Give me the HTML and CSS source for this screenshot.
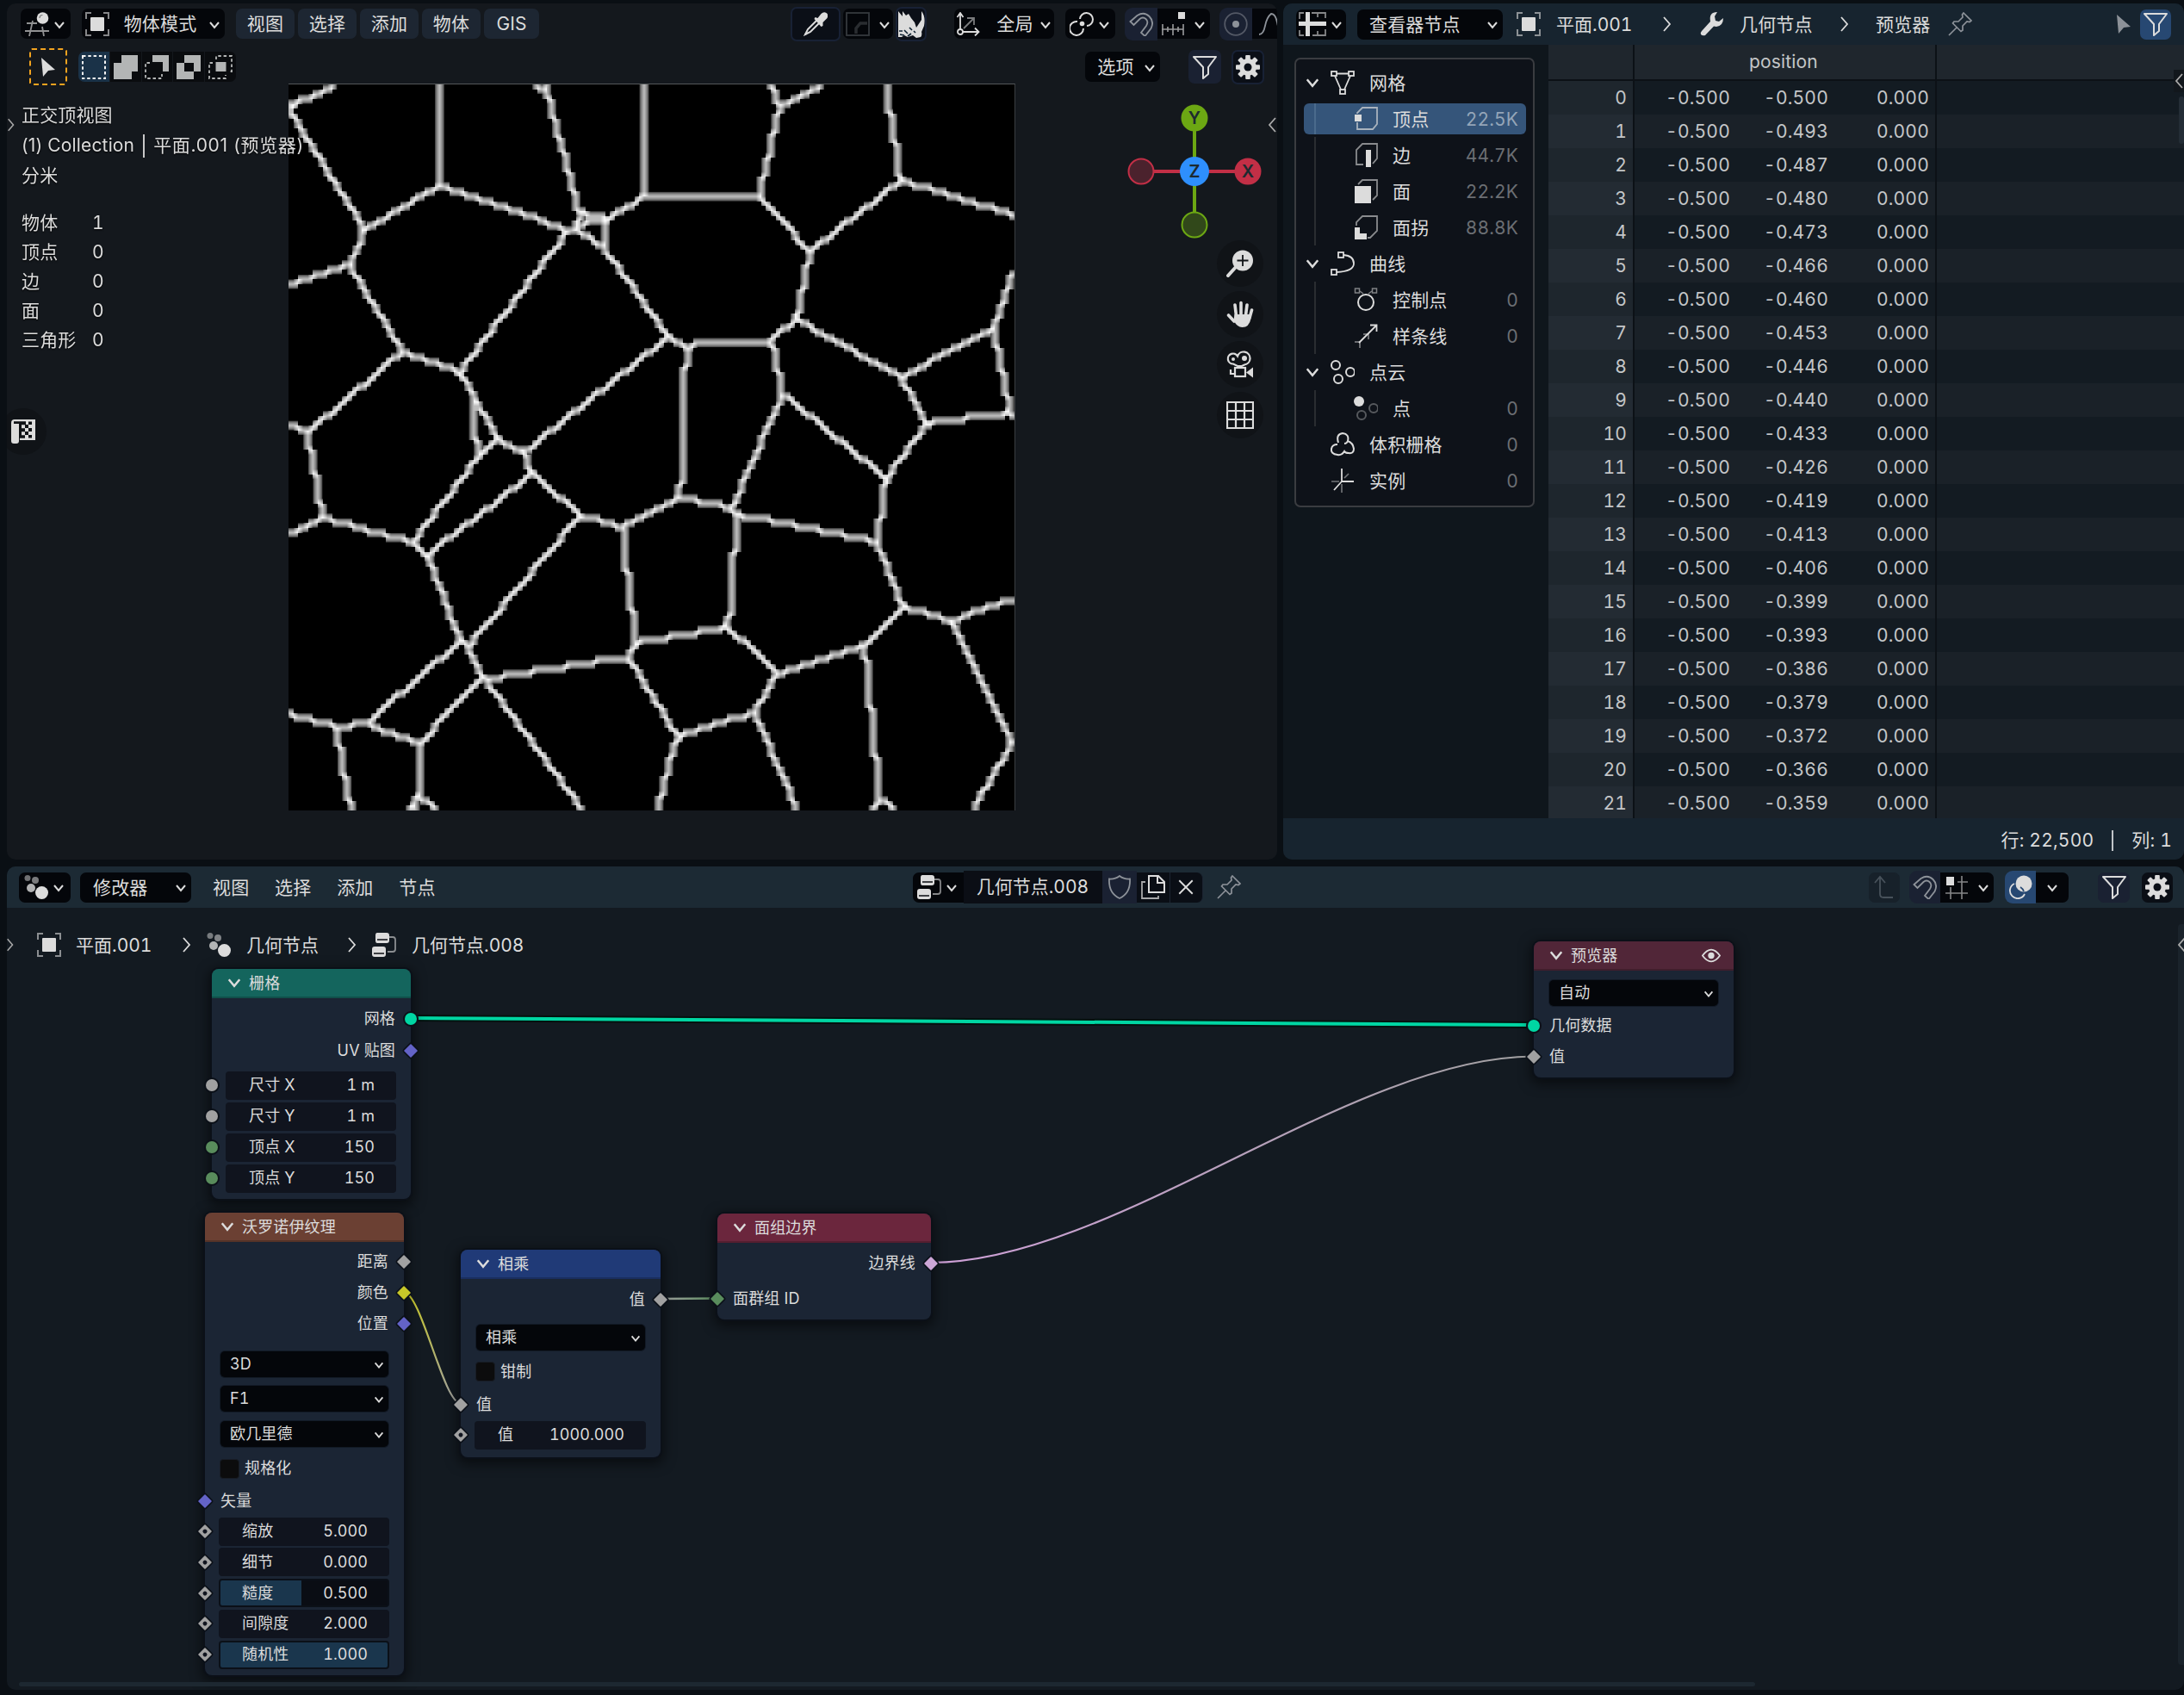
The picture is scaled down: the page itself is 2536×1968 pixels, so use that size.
FILE: index.html
```
<!DOCTYPE html>
<html lang="zh-CN">
<head>
<meta charset="utf-8">
<title>Blender</title>
<link rel="stylesheet" href="styles.css">
</head>
<body>
<svg class="defs" width="0" height="0" aria-hidden="true">
  <defs>
    <symbol id="i-chev" viewBox="0 0 16 16"><path d="M3 5l5 6 5-6" fill="none" stroke="currentColor" stroke-width="2"/></symbol>
    <symbol id="i-next" viewBox="0 0 12 18"><path d="M2 1l7 8-7 8" fill="none" stroke="currentColor" stroke-width="1.8"/></symbol>
    <symbol id="i-prev" viewBox="0 0 12 18"><path d="M10 1L3 9l7 8" fill="none" stroke="currentColor" stroke-width="1.8"/></symbol>
    <symbol id="i-view3d" viewBox="0 0 28 28"><g fill="none" stroke="currentColor" opacity=".65" stroke-width="1.8"><path d="M2 13h12M0 22h28M9 10L5 28M20 17l2 11"/></g><circle cx="20.500" cy="7" r="6.800" fill="currentColor"/><path d="M17 7q0-3.500 3.500-3.500" stroke="#777" fill="none" stroke-width="1.200"/></symbol>
    <symbol id="i-object" viewBox="0 0 28 28"><path d="M1 8V1h6M21 1h6v7M27 20v7h-6M7 27H1v-7" fill="none" stroke="currentColor" stroke-width="2" opacity=".6"/><rect x="6" y="6" width="16" height="16" rx="1" fill="currentColor"/></symbol>
    <symbol id="i-arrow" viewBox="0 0 28 28"><path d="M6 3l16 14-8 1-6 7z" fill="currentColor"/></symbol>
    <symbol id="i-sel1" viewBox="0 0 28 28"><rect x="1" y="1" width="26" height="26" fill="none" stroke="currentColor" stroke-width="2" stroke-dasharray="3.500 2.800"/></symbol>
    <symbol id="i-sel2" viewBox="0 0 28 28"><path d="M9 0h19v19h-7v9H0V9h9z" fill="currentColor"/></symbol>
    <symbol id="i-sel3" viewBox="0 0 28 28"><path d="M9 0h19v19h-7V8H9z" fill="currentColor"/><path d="M6 9H1v18h19v-5" fill="none" stroke="currentColor" stroke-width="1.800" stroke-dasharray="3.500 2.800"/></symbol>
    <symbol id="i-sel4" viewBox="0 0 28 28"><path fill-rule="evenodd" d="M9 0h19v19h-8v9H0V9h9zM9 9v10h11V9z" fill="currentColor"/></symbol>
    <symbol id="i-sel5" viewBox="0 0 28 28"><rect x="8.500" y="8" width="12" height="11" fill="currentColor"/><path d="M9 5V1h18v18h-4M5 9H1v18h19v-4" fill="none" stroke="currentColor" stroke-width="1.800" stroke-dasharray="3.500 2.800"/></symbol>
    <symbol id="i-dropper" viewBox="0 0 28 28"><path d="M13.500 6l3 1 4-5q3-3 6-1t1 6l-5 5v4l-2 1-8-9z" fill="currentColor"/><path d="M16 9L5 20l-3 6 6-3 11-11" fill="none" stroke="currentColor" stroke-width="2"/><path d="M2 24l2 2-3 1z" fill="currentColor"/></symbol>
    <symbol id="i-falloff" viewBox="0 0 28 28"><rect x="1" y="1" width="26" height="26" fill="none" stroke="currentColor" stroke-width="1.800"/><path d="M12 25v-6l5-6h8" fill="none" stroke="currentColor" stroke-width="3.500" opacity=".75"/></symbol>
    <symbol id="i-rhino" viewBox="0 0 32 32"><path d="M1 1l5 6V1l4 5 3-2 3 5 4 5 2 6 6-9V1q5 6 3 17l-3 7q1 4-1 6l-5 1-4-3-6 2-4-2-3 2H1z" fill="currentColor"/><path d="M2 24h4M8 23l4 4M14 20l3 3M3 28l5 1M12 30l4-3M19 24l2 2" fill="none" stroke="#0f2233" stroke-width="1.600"/></symbol>
    <symbol id="i-orient" viewBox="0 0 28 28"><g fill="none" stroke="currentColor" stroke-width="1.800"><circle cx="5" cy="23" r="3"/><path d="M5 20V1M1.500 6L5 1l3.500 5M8 23h18M22 18.500l4.500 4.500-4.500 4.500"/><path d="M9 19L20 8M13 7h8v8" opacity=".55"/></g></symbol>
    <symbol id="i-pivot" viewBox="0 0 28 28"><g fill="none" stroke="currentColor" stroke-width="2"><path d="M12 8A7.500 7.500 0 1 1 20 16"/><path d="M9 11A8 8 0 1 0 16 19"/></g><circle cx="14.500" cy="13.500" r="2.800" fill="currentColor"/></symbol>
    <symbol id="i-magnet" viewBox="0 0 28 28"><path d="M1.500 11l8-7q8-5 14 1t2 14l-7 9-4.500-4 6-8q3-5-.5-8t-7 0l-7 7z" fill="none" stroke="currentColor" stroke-width="1.800"/></symbol>
    <symbol id="i-incr" viewBox="0 0 28 28"><rect x="20" y="0" width="8" height="8" fill="currentColor"/><path d="M1 20h25M2 14v13M8 17v6M14 14v13M20 17v6M26 14v13" stroke="currentColor" stroke-width="1.600" opacity=".7"/></symbol>
    <symbol id="i-prop" viewBox="0 0 28 28"><circle cx="14" cy="14" r="12.800" fill="none" stroke="currentColor" stroke-width="1.800" opacity=".5"/><circle cx="14" cy="14" r="4" fill="currentColor"/></symbol>
    <symbol id="i-curvef" viewBox="0 0 28 28"><path d="M1 26q5 0 7-10T15 2q5 0 7 10t6 14" fill="none" stroke="currentColor" stroke-width="1.800"/></symbol>
    <symbol id="i-filter" viewBox="0 0 28 28"><path d="M1 2h26L18 14v8l-6 5V14z" fill="none" stroke="currentColor" stroke-width="2" stroke-linejoin="round"/></symbol>
    <symbol id="i-gear" viewBox="0 0 28 28"><g fill="currentColor"><rect x="11.200" y="0" width="5.600" height="28" rx="1"/><rect x="11.200" y="0" width="5.600" height="28" rx="1" transform="rotate(45 14 14)"/><rect x="11.200" y="0" width="5.600" height="28" rx="1" transform="rotate(90 14 14)"/><rect x="11.200" y="0" width="5.600" height="28" rx="1" transform="rotate(135 14 14)"/><circle cx="14" cy="14" r="10"/></g><circle cx="14" cy="14" r="4.500" fill="#0b0f17"/></symbol>
    <symbol id="i-zoom" viewBox="0 0 32 32"><circle cx="19" cy="12.500" r="12" fill="currentColor"/><path d="M11 20L2 30" stroke="currentColor" stroke-width="4" stroke-linecap="round"/><path d="M19 6v13M12.500 12.500h13" stroke="#101317" stroke-width="1.800"/></symbol>
    <symbol id="i-hand" viewBox="0 0 32 32"><g stroke="currentColor" stroke-width="3.600" stroke-linecap="round" fill="none"><path d="M11.500 18L10 5M17 16V2.500M22.500 17L24 5M27 20l2.500-9M9 24l-6.500-7"/></g><path d="M9.500 16h18l1 5q-2 10-10 10-6 0-10-8z" fill="currentColor"/></symbol>
    <symbol id="i-camera" viewBox="0 0 32 32"><g fill="none" stroke="currentColor" stroke-width="2.200"><path d="M8 15.500a6 6 0 1 1 5-9 7.500 7.500 0 1 1 8 10L18 18h-5z"/><rect x="10" y="20" width="12" height="10"/><path d="M5 22v5h5"/></g><path d="M23 25.500l8-6v12z" fill="currentColor"/><circle cx="8" cy="10" r="2" fill="currentColor"/><circle cx="21" cy="9" r="3" fill="currentColor"/></symbol>
    <symbol id="i-grid" viewBox="0 0 32 32"><path d="M1 1h30v30H1zM1 11h30M1 21h30M11 1v30M21 1v30" fill="none" stroke="currentColor" stroke-width="2.200"/></symbol>
    <symbol id="i-toggle" viewBox="0 0 28 28"><path d="M4 0h24v24H10v-3h2V5H9v20q0 3-3 3H3q-3 0-3-3V4q0-4 4-4z" fill="currentColor"/><path d="M3 2.200h14v4h-5v4h4v4h-4v4h4v3.600H9V5H3zM20 2.500h4v3.500h-4zM16 6h4v4h-4zM20 10h4v4h-4zM16 14h4v4h-4zM20 18h4v3.500h-4z" fill="#101317"/></symbol>
    <symbol id="i-sheet" viewBox="0 0 32 28"><path d="M1 8V1h5M15 1h16v6M31 20v7H16M6 27H1v-6M22 1v5M22 22v5" fill="none" stroke="currentColor" stroke-width="1.800" opacity=".6"/><path d="M8 0h5v11h19v5H13v12H8V16H0v-5h8z" fill="currentColor"/></symbol>
    <symbol id="i-wrench" viewBox="0 0 28 28"><path d="M20 0l-3 5 1 5 4 1 5-4q0 9-8 10l-3-.5L6 27q-3 1-5-1-1-2 1-4l10-11q-2-11 8-11z" fill="currentColor"/></symbol>
    <symbol id="i-pin" viewBox="0 0 28 28"><path d="M18 1l9 9-2 1.500-3-.5-5 5 0 5-2 1.500L5.500 13l1.500-2 5 0 5-5-.5-3zM10 18L1 27" fill="none" stroke="currentColor" stroke-width="1.700"/></symbol>
    <symbol id="i-mesh" viewBox="0 0 28 28"><g fill="none" stroke="currentColor" stroke-width="1.800"><rect x="1" y="1" width="6" height="5"/><rect x="21" y="1" width="6" height="5"/><rect x="11" y="22" width="6" height="5"/><path d="M7 3.500h14M5 6l7 16M23 6l-7 16"/></g></symbol>
    <symbol id="i-cvert" viewBox="0 0 28 28"><path d="M4 8V7l6-6h17v19l-5 6H4v-8" fill="none" stroke="currentColor" stroke-width="1.800" opacity=".7"/><rect x="1" y="9" width="8" height="8" fill="currentColor"/></symbol>
    <symbol id="i-cedge" viewBox="0 0 28 28"><path d="M11 25H3V8l7-7h17v17l-5 6" fill="none" stroke="currentColor" stroke-width="1.800" opacity=".6"/><rect x="14" y="8" width="6" height="20" fill="currentColor"/></symbol>
    <symbol id="i-cface" viewBox="0 0 28 28"><path d="M5 6l5-5h17v18l-5 5" fill="none" stroke="currentColor" stroke-width="1.800" opacity=".6"/><rect x="1" y="8" width="19" height="20" fill="currentColor"/></symbol>
    <symbol id="i-ccorner" viewBox="0 0 28 28"><path d="M3 12V8l7-7h17v17l-8 8h-3" fill="none" stroke="currentColor" stroke-width="1.800" opacity=".6"/><path d="M1 14h6v7h8v7H1z" fill="currentColor"/></symbol>
    <symbol id="i-curve" viewBox="0 0 28 28"><g fill="none" stroke="currentColor" stroke-width="1.800"><rect x="9" y="1" width="6" height="6"/><rect x="1" y="21" width="6" height="6"/><path d="M15 4q12 1 12 10T7 24"/></g></symbol>
    <symbol id="i-ctrl" viewBox="0 0 28 28"><circle cx="14" cy="17" r="9" fill="none" stroke="currentColor" stroke-width="2"/><g fill="none" stroke="currentColor" stroke-width="1.500" opacity=".55"><rect x="1.500" y="1" width="5" height="5"/><rect x="21.500" y="1" width="5" height="5"/><path d="M7 4l4 3M21 4l-4 3"/></g></symbol>
    <symbol id="i-spline" viewBox="0 0 28 28"><path d="M6 22L27 1M19 1.500h7.500V9" fill="none" stroke="currentColor" stroke-width="1.800"/><path d="M1 21h6v7M11 12h6v6" fill="none" stroke="currentColor" stroke-width="1.500" opacity=".6"/></symbol>
    <symbol id="i-cloudp" viewBox="0 0 28 28"><g fill="none" stroke="currentColor" stroke-width="2"><circle cx="6" cy="6" r="5"/><circle cx="23" cy="14" r="5"/><circle cx="9" cy="22" r="5"/></g></symbol>
    <symbol id="i-point" viewBox="0 0 28 28"><circle cx="6" cy="6" r="6" fill="currentColor"/><g fill="none" stroke="currentColor" stroke-width="2" opacity=".35"><circle cx="23" cy="14" r="5"/><circle cx="9" cy="22" r="5"/></g></symbol>
    <symbol id="i-volume" viewBox="0 0 28 28"><path d="M9 12Q6 2 14 1q8 1 6 9 6 2 7 9 0 6-6 5-4 0-5-2-3 5-8 4-8-1-7-7 1-5 7-5M20 10q-1 3-4 3" fill="none" stroke="currentColor" stroke-width="2"/></symbol>
    <symbol id="i-inst" viewBox="0 0 28 28"><path d="M13 0v15h14M13 15L4 25" fill="none" stroke="currentColor" stroke-width="1.800"/><path d="M1 15h9M13 18v10M16 11l5-5" fill="none" stroke="currentColor" stroke-width="1.600" opacity=".5"/></symbol>
    <symbol id="i-geo" viewBox="0 0 28 28"><g fill="currentColor"><circle cx="4" cy="3.500" r="3.500" opacity=".5"/><circle cx="13" cy="6" r="4" opacity=".55"/><circle cx="8" cy="15" r="5" opacity=".8"/><circle cx="20.500" cy="20.500" r="7.500"/></g></symbol>
    <symbol id="i-tree" viewBox="0 0 28 28"><g fill="currentColor"><path d="M6 0h11q3 0 3 3v6q0 3-3 3H6q-2 0-2-3V3q0-3 2-3zM3 16h10q3 0 3 3v6q0 3-3 3H3q-3 0-3-3v-6q0-3 3-3z"/></g><path d="M6 8h12M2 24h12" stroke="#0a0d12" stroke-width="1.600"/><path d="M21 5h3q3 0 3 3v11q0 3-3 3h-6M16 5h5" fill="none" stroke="currentColor" stroke-width="1.800" opacity=".6"/></symbol>
    <symbol id="i-shield" viewBox="0 0 28 28"><path d="M14 1q5 4 12 3.500Q27 21 14 27 1 21 2 4.500 9 5 14 1z" fill="none" stroke="currentColor" stroke-width="1.800"/></symbol>
    <symbol id="i-copy" viewBox="0 0 28 28"><path d="M9 1h11l7 7v12H9zM19 1v8h8" fill="none" stroke="currentColor" stroke-width="2"/><path d="M5 8H1v19h19v-3" fill="none" stroke="currentColor" stroke-width="1.800" opacity=".75"/></symbol>
    <symbol id="i-x" viewBox="0 0 28 28"><path d="M5 5l18 18M23 5L5 23" fill="none" stroke="currentColor" stroke-width="2.200"/></symbol>
    <symbol id="i-up" viewBox="0 0 28 28"><path d="M9 2v20q0 4 4 4h11M3 9l6-7 6 7" fill="none" stroke="currentColor" stroke-width="1.800"/></symbol>
    <symbol id="i-snapg" viewBox="0 0 28 28"><rect x="2" y="2" width="9" height="10" fill="currentColor"/><path d="M15 8h12M1 21h26M7 14v14M20 1v27" fill="none" stroke="currentColor" stroke-width="1.600" opacity=".6"/></symbol>
    <symbol id="i-overlay" viewBox="0 0 28 28"><circle cx="18" cy="10" r="9.500" fill="currentColor"/><path d="M7 10a9 9 0 1 0 12 12" fill="none" stroke="currentColor" stroke-width="1.800"/><path d="M14 14a9 9 0 0 1 4 5" fill="none" stroke="#274872" stroke-width="1.600"/></symbol>
    <symbol id="i-eye" viewBox="0 0 24 18"><path d="M1 9q11-15 22 0-11 15-22 0z" fill="none" stroke="currentColor" stroke-width="2"/><circle cx="12" cy="9" r="4" fill="currentColor"/></symbol>
    <linearGradient id="g-pink" gradientUnits="userSpaceOnUse" x1="1081" y1="0" x2="1781" y2="0"><stop offset="0" stop-color="#cfa0d8"/><stop offset="1" stop-color="#a1a1a1"/></linearGradient>
    <linearGradient id="g-yellow" gradientUnits="userSpaceOnUse" x1="0" y1="1500" x2="0" y2="1630"><stop offset="0" stop-color="#c7c729"/><stop offset="1" stop-color="#a1a1a1"/></linearGradient>
    <linearGradient id="g-green" gradientUnits="userSpaceOnUse" x1="767" y1="0" x2="833" y2="0"><stop offset="0" stop-color="#a1a1a1"/><stop offset="1" stop-color="#598c5c"/></linearGradient>
  </defs>
</svg>

<div class="window">
  <section class="area view3d">
    <header class="bar v-bar">
      <div class="btn dark w58"><svg class="i28"><use href="#i-view3d"/></svg><svg class="chev"><use href="#i-chev"/></svg></div>
      <div class="btn dark mode"><svg class="i28"><use href="#i-object"/></svg><span>物体模式</span><svg class="chev"><use href="#i-chev"/></svg></div>
      <nav class="menus"><span>视图</span><span>选择</span><span>添加</span><span>物体</span><span class="gis">GIS</span></nav>
      <div class="v-right">
        <div class="btn outlined w58"><svg class="i28"><use href="#i-dropper"/></svg></div>
        <div class="btn dark w58 ml3"><svg class="i28 dim"><use href="#i-falloff"/></svg><svg class="chev wide"><use href="#i-chev"/></svg></div>
        <div class="btn outlined w36 ml3"><svg class="i32"><use href="#i-rhino"/></svg></div>
        <div class="btn dark orient"><svg class="i28"><use href="#i-orient"/></svg><span>全局</span><svg class="chev"><use href="#i-chev"/></svg></div>
        <div class="btn dark w58 ml13"><svg class="i28"><use href="#i-pivot"/></svg><svg class="chev"><use href="#i-chev"/></svg></div>
        <div class="pair ml11"><div class="btn navy w38"><svg class="i28 mid"><use href="#i-magnet"/></svg></div><div class="btn dark w61"><svg class="i28"><use href="#i-incr"/></svg><svg class="chev wide"><use href="#i-chev"/></svg></div></div>
        <div class="pair ml11 cut"><div class="btn navy w38"><svg class="i28 mid"><use href="#i-prop"/></svg></div><div class="btn dark w61 start"><svg class="i28 mid"><use href="#i-curvef"/></svg></div></div>
      </div>
    </header>
    <div class="bar tools">
      <div class="tool-active"><svg class="i28"><use href="#i-arrow"/></svg></div>
      <div class="selmodes">
        <span class="on"><svg class="i28"><use href="#i-sel1"/></svg></span><span><svg class="i28"><use href="#i-sel2"/></svg></span><span><svg class="i28"><use href="#i-sel3"/></svg></span><span><svg class="i28"><use href="#i-sel4"/></svg></span><span><svg class="i28"><use href="#i-sel5"/></svg></span>
      </div>
      <div class="btn dark options"><span>选项</span><svg class="chev"><use href="#i-chev"/></svg></div>
      <div class="btn navy w38 tall"><svg class="i28"><use href="#i-filter"/></svg></div>
      <div class="btn outlined w38 gearb"><svg class="i28"><use href="#i-gear"/></svg></div>
    </div>
    <canvas id="plane" class="plane" width="843" height="843"></canvas>
    <div class="overlay">
      <p>正交顶视图</p>
      <p>(1) Collection<i></i><span>平面.001 (预览器)</span></p>
      <p>分米</p>
      <dl><dt>物体</dt><dd>1</dd><dt>顶点</dt><dd>0</dd><dt>边</dt><dd>0</dd><dt>面</dt><dd>0</dd><dt>三角形</dt><dd>0</dd></dl>
    </div>
    <svg class="tab-l"><use href="#i-next"/></svg>
    <svg class="tab-r"><use href="#i-prev"/></svg>
    <div class="midtool"><svg class="i28"><use href="#i-toggle"/></svg></div>
    <svg class="gizmo" viewBox="0 0 160 160" width="160" height="160">
      <path d="M80 80V18M80 80v62" stroke="#6ca713" stroke-width="4"/>
      <path d="M18 80h124" stroke="#c22f46" stroke-width="4"/>
      <circle cx="80" cy="18" r="15.500" fill="#6ca713"/><circle cx="142" cy="80" r="15.500" fill="#c22f46"/>
      <circle cx="18" cy="80" r="14.500" fill="#4b222d" stroke="#c22f46" stroke-width="2"/>
      <circle cx="80" cy="142" r="14.500" fill="#31481a" stroke="#6ca713" stroke-width="2"/>
      <circle cx="80" cy="80" r="17" fill="#2e8ffd"/>
      <g class="axis"><text x="80" y="25">Y</text><text x="80" y="87">Z</text><text x="142" y="87">X</text></g>
    </svg>
    <div class="navs">
      <span><svg class="i32"><use href="#i-zoom"/></svg></span><span><svg class="i32"><use href="#i-hand"/></svg></span><span><svg class="i32"><use href="#i-camera"/></svg></span><span><svg class="i32"><use href="#i-grid"/></svg></span>
    </div>
  </section>

  <section class="area sheet">
    <header class="bar s-bar">
      <div class="btn dark w58"><svg class="i32"><use href="#i-sheet"/></svg><svg class="chev"><use href="#i-chev"/></svg></div>
      <div class="btn dark picker"><span>查看器节点</span><svg class="chev"><use href="#i-chev"/></svg></div>
      <svg class="i28 c1"><use href="#i-object"/></svg><span class="c2">平面.001</span>
      <svg class="sep"><use href="#i-next"/></svg>
      <svg class="i28 c3"><use href="#i-wrench"/></svg><span class="c4">几何节点</span>
      <svg class="sep"><use href="#i-next"/></svg>
      <span class="c5">预览器</span><svg class="i28 c6 mid"><use href="#i-pin"/></svg>
      <div class="s-end"><div class="btn w38 mid"><svg class="i28"><use href="#i-arrow"/></svg></div><div class="btn blue w36"><svg class="i28"><use href="#i-filter"/></svg></div></div>
    </header>
    <div class="s-main">
      <aside class="tree">
        <ul>
          <li><svg class="tw"><use href="#i-chev"/></svg><svg class="i28"><use href="#i-mesh"/></svg><span>网格</span></li>
          <li class="kid on"><svg class="i28"><use href="#i-cvert"/></svg><span>顶点</span><b>22.5K</b></li>
          <li class="kid"><svg class="i28"><use href="#i-cedge"/></svg><span>边</span><b>44.7K</b></li>
          <li class="kid"><svg class="i28"><use href="#i-cface"/></svg><span>面</span><b>22.2K</b></li>
          <li class="kid"><svg class="i28"><use href="#i-ccorner"/></svg><span>面拐</span><b>88.8K</b></li>
          <li><svg class="tw"><use href="#i-chev"/></svg><svg class="i28"><use href="#i-curve"/></svg><span>曲线</span></li>
          <li class="kid"><svg class="i28"><use href="#i-ctrl"/></svg><span>控制点</span><b>0</b></li>
          <li class="kid"><svg class="i28"><use href="#i-spline"/></svg><span>样条线</span><b>0</b></li>
          <li><svg class="tw"><use href="#i-chev"/></svg><svg class="i28"><use href="#i-cloudp"/></svg><span>点云</span></li>
          <li class="kid"><svg class="i28"><use href="#i-point"/></svg><span>点</span><b>0</b></li>
          <li class="leaf"><svg class="i28"><use href="#i-volume"/></svg><span>体积栅格</span><b>0</b></li>
          <li class="leaf"><svg class="i28"><use href="#i-inst"/></svg><span>实例</span><b>0</b></li>
        </ul>
      </aside>
      <div class="table" id="table">
        <div class="tr th"><span class="ix"></span><span class="pos">position</span><span class="rest"></span></div>
      </div>
      <div class="tab-s"><svg><use href="#i-prev"/></svg></div>
      <div class="scroll-s"></div>
    </div>
    <footer class="s-foot"><span>行: 22,500</span><i></i><span>列: 1</span></footer>
  </section>

  <section class="area nodes">
    <div class="scroll-v"></div>
    <header class="bar n-bar">
      <div class="btn dark w60"><svg class="i28"><use href="#i-geo"/></svg><svg class="chev"><use href="#i-chev"/></svg></div>
      <div class="btn dark modif"><span>修改器</span><svg class="chev"><use href="#i-chev"/></svg></div>
      <nav class="plain"><span>视图</span><span>选择</span><span>添加</span><span>节点</span></nav>
      <div class="n-mid">
        <div class="btn dark w59"><svg class="i28"><use href="#i-tree"/></svg><svg class="chev"><use href="#i-chev"/></svg></div>
        <div class="name">几何节点.008</div>
        <div class="btn navy sq w40"><svg class="i28 mid"><use href="#i-shield"/></svg></div>
        <div class="btn dark2 sq w39"><svg class="i28"><use href="#i-copy"/></svg></div>
        <div class="btn dark2 w38 rr"><svg class="i24"><use href="#i-x"/></svg></div>
        <svg class="i28 mid pin"><use href="#i-pin"/></svg>
      </div>
      <div class="n-end">
        <div class="btn faint w36"><svg class="i28"><use href="#i-up"/></svg></div>
        <div class="pair m12"><div class="btn navy w36"><svg class="i28 mid"><use href="#i-magnet"/></svg></div><div class="btn dark w62"><svg class="i28"><use href="#i-snapg"/></svg><svg class="chev wide"><use href="#i-chev"/></svg></div></div>
        <div class="pair m13"><div class="btn blue w36"><svg class="i28"><use href="#i-overlay"/></svg></div><div class="btn dark w38"><svg class="chev solo"><use href="#i-chev"/></svg></div></div>
        <div class="btn navy w37 m34"><svg class="i28"><use href="#i-filter"/></svg></div>
        <div class="btn dark2 w36 m14"><svg class="i28"><use href="#i-gear"/></svg></div>
      </div>
    </header>
    <div class="crumbs">
      <svg class="i28"><use href="#i-object"/></svg><span class="k1">平面.001</span><svg class="sep"><use href="#i-next"/></svg>
      <svg class="i28 k2"><use href="#i-geo"/></svg><span class="k3">几何节点</span><svg class="sep"><use href="#i-next"/></svg>
      <svg class="i28 k2"><use href="#i-tree"/></svg><span class="k3">几何节点.008</span>
    </div>
    <svg class="links" viewBox="0 1006 2536 956" width="2536" height="956">
      <g fill="none">
        <path d="M477 1182L1781 1190" stroke="#04120f" stroke-width="8"/><path d="M477 1182L1781 1190" stroke="#00d6a3" stroke-width="4"/>
        <path d="M1081 1466C1291 1466 1571 1226.500 1781 1226.500" stroke="url(#g-pink)" stroke-width="2.200"/>
        <path d="M469 1500.500C489 1500.500 515 1629.500 535 1629.500" stroke="url(#g-yellow)" stroke-width="2.200"/>
        <path d="M767 1508L833 1507.500" stroke="url(#g-green)" stroke-width="2.600"/>
      </g>
    </svg>

    <article class="node n-grid">
      <h3><svg class="tw"><use href="#i-chev"/></svg>栅格</h3>
      <div class="row out r37">网格<i class="so circ geo"></i></div>
      <div class="row out r37">UV 贴图<i class="so dia vec"></i></div>
      <div class="row r36 gap4"><i class="si circ flt"></i><div class="field"><span>尺寸 X</span><b>1 m</b></div></div>
      <div class="row r36"><i class="si circ flt"></i><div class="field"><span>尺寸 Y</span><b>1 m</b></div></div>
      <div class="row r36"><i class="si circ int"></i><div class="field"><span>顶点 X</span><b>150</b></div></div>
      <div class="row r36"><i class="si circ int"></i><div class="field"><span>顶点 Y</span><b>150</b></div></div>
    </article>

    <article class="node n-voro">
      <h3><svg class="tw"><use href="#i-chev"/></svg>沃罗诺伊纹理</h3>
      <div class="row out">距离<i class="so dia flt"></i></div>
      <div class="row out">颜色<i class="so dia col"></i></div>
      <div class="row out">位置<i class="so dia vec"></i></div>
      <div class="row drop gap9"><div class="select">3D<svg><use href="#i-chev"/></svg></div></div>
      <div class="row drop"><div class="select">F1<svg><use href="#i-chev"/></svg></div></div>
      <div class="row drop"><div class="select">欧几里德<svg><use href="#i-chev"/></svg></div></div>
      <div class="row check"><i class="box"></i>规格化</div>
      <div class="row"><i class="si dia vec"></i>矢量</div>
      <div class="row"><i class="si dia flt dot"></i><div class="field"><span>缩放</span><b>5.000</b></div></div>
      <div class="row"><i class="si dia flt dot"></i><div class="field"><span>细节</span><b>0.000</b></div></div>
      <div class="row"><i class="si dia flt dot"></i><div class="field slider" style="--v:48.500%"><span>糙度</span><b>0.500</b></div></div>
      <div class="row"><i class="si dia flt dot"></i><div class="field"><span>间隙度</span><b>2.000</b></div></div>
      <div class="row"><i class="si dia flt dot"></i><div class="field slider" style="--v:100%"><span>随机性</span><b>1.000</b></div></div>
    </article>

    <article class="node n-mul">
      <h3><svg class="tw"><use href="#i-chev"/></svg>相乘</h3>
      <div class="row out">值<i class="so dia flt"></i></div>
      <div class="row drop gap6"><div class="select">相乘<svg><use href="#i-chev"/></svg></div></div>
      <div class="row check"><i class="box"></i>钳制</div>
      <div class="row"><i class="si dia flt"></i>值</div>
      <div class="row"><i class="si dia flt dot"></i><div class="field"><span>值</span><b>1000.000</b></div></div>
    </article>

    <article class="node n-edge">
      <h3><svg class="tw"><use href="#i-chev"/></svg>面组边界</h3>
      <div class="row out">边界线<i class="so dia bool"></i></div>
      <div class="row gap5"><i class="si dia int"></i>面群组 ID</div>
    </article>

    <article class="node n-view">
      <h3><svg class="tw"><use href="#i-chev"/></svg>预览器<svg class="eye"><use href="#i-eye"/></svg></h3>
      <div class="row drop39"><div class="select">自动<svg><use href="#i-chev"/></svg></div></div>
      <div class="row"><i class="si circ geo"></i>几何数据</div>
      <div class="row"><i class="si dia flt"></i>值</div>
    </article>
    <svg class="tab-n"><use href="#i-next"/></svg>
    <svg class="tab-n2"><use href="#i-prev"/></svg>
    <div class="scroll-h"></div>
  </section>
</div>
<script src="app.js"></script>
</body>
</html>
```
FILE: styles.css
```
* { box-sizing: border-box; }
body { margin: 0; background: #0a0f14; color: #dcdcdc; font: 21px/1 "Inter", "Noto Sans CJK SC", sans-serif; letter-spacing: .15px; font-variant-numeric: tabular-nums; }
p, h3, dl, dd, ul { margin: 0; padding: 0; font-weight: 400; list-style: none; }
b { font-weight: 400; }
.defs { position: absolute; }
.window { width: 2536px; height: 1968px; overflow: hidden; padding: 4px 0 6px 8px; display: grid; grid-template: 994px 956px / 1475px 1046px; column-gap: 7px; row-gap: 8px; }
.area { position: relative; overflow: hidden; border-radius: 10px; }
.nodes { grid-column: 1 / 3; }
.bar { display: flex; align-items: center; }

.i24 { width: 24px; height: 24px; flex: none; }
.i28 { width: 28px; height: 28px; flex: none; }
.i32 { width: 32px; height: 32px; flex: none; }
.chev { width: 16px; height: 16px; flex: none; margin-left: 4px; position: relative; top: 1px; }
.wide { margin-left: 9px; }
.solo { margin-left: 0; }
.mid { color: #8d9299; }
.dim { color: #35393d; }

.btn { display: flex; align-items: center; justify-content: center; height: 35px; border-radius: 7px; flex: none; white-space: nowrap; }
.dark { background: #04060a; }
.dark2 { background: #0a0e15; }
.navy { background: #1a2132; }
.blue { background: #274872; }
.faint { background: #17212a; color: #47515a; }
.outlined { background: #0b0f17; border: 2px solid #182135; height: 40px; }
.w36 { width: 36px; } .w37 { width: 37px; } .w38 { width: 38px; } .w39 { width: 39px; } .w40 { width: 40px; }
.w58 { width: 58px; } .w59 { width: 59px; } .w60 { width: 60px; } .w61 { width: 61px; } .w62 { width: 62px; }
.ml3 { margin-left: 3px; } .ml11 { margin-left: 11px; } .ml13 { margin-left: 13px; }
.pair { display: flex; align-items: center; flex: none; }
.pair .btn:first-child { border-radius: 9px 0 0 9px; height: 38px; }
.pair .btn:last-child { border-radius: 0 7px 7px 0; }
.start { justify-content: flex-start; padding-left: 7px; }

.view3d { background: #14181d; }
.v-bar { height: 48px; padding: 0 0 1px 16px; }
.mode { width: 166px; margin-left: 13px; }
.mode span { margin: 0 9px 0 17px; }
.menus { display: flex; gap: 4px; margin-left: 13px; }
.menus span { width: 68px; height: 35px; line-height: 35px; text-align: center; background: #1d2632; border-radius: 7px; }
.menus .gis { width: 64px; }
.v-right { display: flex; align-items: center; position: relative; margin-left: 292px; width: 565px; }
.orient { width: 116px; margin-left: 32px; }
.orient span { margin: 0 2px 0 19px; }
.tools { height: 52px; padding: 0 0 1px 26px; }
.tool-active { width: 44px; height: 43px; border: 2px dashed #f2a31f; border-radius: 3px; display: flex; align-items: center; justify-content: center; margin-right: 13px; }
.selmodes { display: flex; gap: 1px; width: 183px; height: 35px; border-radius: 7px; overflow: hidden; color: #b3b5b5; }
.selmodes span { flex: 1; background: #0a0c0f; display: flex; align-items: center; justify-content: center; }
.selmodes .on { background: #1a3248; color: #f2f2f2; }
.options { width: 87px; margin-left: 986px; padding-left: 10px; }
.options span { margin-right: 6px; }
.tall { height: 39px; margin-left: 33px; }
.gearb { margin-left: 12px; }

.plane { position: absolute; left: 327px; top: 93px; width: 844px; height: 844px; border-top: 1px solid #54585a; border-right: 1px solid #3b3e41; background: #000; }
.overlay { position: absolute; left: 17px; top: 111.500px; text-shadow: 0 1px 2px #000; }
.overlay p { height: 35px; line-height: 35px; white-space: nowrap; font-variant-numeric: normal; }
.overlay p i { display: inline-block; width: 2px; height: 27px; margin: 0 10px; vertical-align: -7px; background: #c8c8c8; }
.overlay p span { letter-spacing: .65px; }
.overlay dl { display: grid; grid-template-columns: 82px auto; line-height: 34px; margin-top: 21.500px; }
.tab-l { position: absolute; left: 0; top: 132px; width: 10px; height: 18px; color: #aaa; }
.tab-r { position: absolute; right: 0; top: 132px; width: 12px; height: 18px; color: #aaa; }
.midtool { position: absolute; left: -8px; top: 470px; width: 54px; height: 54px; display: flex; align-items: center; justify-content: center; background: #101317; border-radius: 50%; }
.gizmo { position: absolute; left: 1299px; top: 115px; }
.axis { font-size: 20px; font-weight: 600; text-anchor: middle; fill: #1c2a30; }
.navs { position: absolute; left: 1405px; top: 275px; display: grid; gap: 4.500px; }
.navs span { width: 54px; height: 54px; border-radius: 50%; background: #101317; display: flex; align-items: center; justify-content: center; }

.sheet { background: #0f161c; display: flex; flex-direction: column; }
.s-bar { height: 48px; background: #17242f; padding: 0 15px 0 15px; flex: none; }
.picker { width: 169px; margin-left: 13px; justify-content: space-between; padding: 0 4px 0 14px; }
.c1 { margin-left: 16px; } .c2 { width: 104px; margin: 0 19px 0 18px; letter-spacing: 0; }
.sep { width: 12px; height: 18px; flex: none; }
.c3 { margin-left: 32px; } .c4 { width: 84px; margin: 0 32px 0 18px; white-space: nowrap; }
.c5 { margin-left: 30px; } .c6 { margin-left: 21px; }
.s-end { display: flex; margin-left: auto; }
.s-main { position: relative; display: flex; flex: 1; overflow: hidden; }
.tree { width: 308px; padding: 15px 16px 0 13px; flex: none; }
.tree ul { border: 2px solid #3a3c40; border-radius: 7px; height: 522px; padding: 6px 8px 0 9px; background: #0e1219; display: flex; flex-direction: column; }
.tree li { height: 42px; flex: none; display: flex; align-items: center; position: relative; padding-right: 9px; }
.tree .tw { width: 20px; height: 20px; margin-right: 11px; }
.tree .i28 { margin-right: 17px; }
.tree li.kid { height: 36px; margin: 3px 0; padding-left: 58px; border-radius: 6px; }
.tree li.kid::before { content: ""; position: absolute; left: 12px; top: -3px; bottom: -3px; width: 2px; background: #2a2d31; }
.tree li.leaf { padding-left: 31px; }
.tree li.on { background: #35557a; }
.tree li.on::before { background: #4a6a8c; top: 0; bottom: 0; }
.tree b { margin-left: auto; color: #6b6e73; }
.tree .on b { color: #94a5b8; }
.table { flex: 1; color: #c4c6c8; }
.tr { display: flex; height: 39px; line-height: 39px; background: #131b22; text-align: right; }
.tr:nth-child(odd) { background: #1a2128; }
.tr .ix { width: 100px; padding-right: 7px; background: #1e262d; border-right: 2px solid #0c1116; }
.tr:nth-child(odd) .ix { background: #232b33; }
.tr .v { width: 114px; letter-spacing: .2px; } .tr .v1 { width: 111px; } .tr .v3 { width: 126px; padding-right: 7px; border-right: 2px solid #0c1116; }
.tr.th, .tr.th .ix { background: #1f262d; }
.tr.th { height: 42px; border-bottom: 2px solid #0c1116; }
.pos { width: 351px; padding-right: 3px; text-align: center; border-right: 2px solid #0c1116; }
.tab-s { position: absolute; right: 0; top: 29px; width: 12px; height: 26px; background: #12171c; }
.tab-s svg { width: 12px; height: 18px; margin-top: 4px; color: #aaa; }
.scroll-s { position: absolute; right: 0; top: 60px; width: 6px; height: 55px; background: #242d36; border-radius: 4px; }
.s-foot { height: 48px; background: #17242f; display: flex; align-items: center; justify-content: flex-end; padding: 3px 14px 0 0; gap: 21px; flex: none; letter-spacing: .2px; }
.s-foot i { width: 2px; height: 24px; background: #c0c4c8; }

.nodes { background: #131a21; }
.n-bar { height: 48px; background: #1c2a34; padding-left: 14px; position: relative; }
.modif { width: 129px; margin-left: 11px; justify-content: space-between; padding: 0 4px 0 15px; }
.plain { display: flex; gap: 29.800px; margin-left: 25px; }
.n-mid { display: flex; align-items: center; margin-left: 554px; }
.n-mid .w59 { border-radius: 7px 0 0 7px; }
.name { width: 161px; height: 38px; line-height: 38px; background: #0b0e15; padding-left: 15px; white-space: nowrap; letter-spacing: 0; }
.sq { border-radius: 0; }
.n-mid .navy { height: 38px; }
.n-mid .dark2 { border-right: 1px solid #1c2431; }
.rr { border-radius: 0 7px 7px 0; }
.pin { margin-left: 16px; }
.n-end { display: flex; align-items: center; margin-left: auto; padding-right: 13px; }
.m12 { margin-left: 11px; } .m13 { margin-left: 13px; } .m34 { margin-left: 34px; } .m14 { margin-left: 14px; }
.crumbs { display: flex; align-items: center; height: 28px; margin-top: 29px; padding-left: 35px; white-space: nowrap; letter-spacing: 0; }
.k1 { width: 88px; margin: 0 35px 0 17px; }
.k2 { margin-left: 17px; } .k3 { margin-left: 18px; margin-right: 33px; }
.links { position: absolute; left: -8px; top: 0; }

.node { position: absolute; background: #1b2534; border-radius: 8px; box-shadow: 0 0 0 2px #0b1018, 0 4px 14px 4px rgba(0,0,0,.5); font-size: 18px; }
.node h3 { height: 34px; line-height: 33px; border-radius: 8px 8px 0 0; padding-left: 16px; display: flex; align-items: center; margin-bottom: 6px; border-bottom: 2px solid rgba(0,0,0,.2); font-size: 18px; }
.node .tw { width: 20px; height: 20px; margin-right: 7px; }
.row { position: relative; height: 35.700px; display: flex; align-items: center; padding: 0 18px; white-space: nowrap; }
.out { justify-content: flex-end; }
.r37 { height: 37px; } .r36 { height: 36px; }
.gap4 { margin-top: 4px; } .gap5 { margin-top: 5px; } .gap6 { margin-top: 6px; } .gap9 { margin-top: 9px; }
.drop { height: 40.600px; }
.drop39 { height: 40px; }
.check { height: 39.400px; }
.field { position: relative; flex: 1; margin: 0 -1px 0 -2px; height: 33px; border-radius: 4px; background: #10141e; display: flex; align-items: center; justify-content: space-between; padding: 0 25px 0 27px; }
.field b { letter-spacing: .05px; }
.slider { border: 2px solid #0b1018; padding: 0 23px 0 25px; background: linear-gradient(90deg, #1a364d var(--v), #0a0d14 var(--v)); }
.select { flex: 1; height: 30px; border-radius: 5px; background: #04060a; display: flex; align-items: center; justify-content: space-between; padding: 0 4px 0 11px; box-shadow: 0 0 0 1px #121a26; }
.select svg { width: 14px; height: 14px; position: relative; top: 1px; }
.box { width: 23px; height: 23px; border-radius: 4px; background: #0c0c0d; border: 1px solid #181d26; margin: 0 6px 0 -1px; }
.so, .si { position: absolute; top: 50%; width: 14px; height: 14px; margin-top: -7px; box-shadow: 0 0 0 2px #0b1018; }
.so { right: -7px; } .si { left: -7px; }
.circ { border-radius: 50%; }
.dia { transform: rotate(45deg) scale(.82); border-radius: 1px; }
.dot::after { content: ""; position: absolute; left: 4px; top: 4px; width: 6px; height: 6px; border-radius: 50%; background: #10141e; }
.geo { background: #00d6a3; } .vec { background: #6363c7; } .flt { background: #a1a1a1; } .int { background: #598c5c; } .col { background: #c7c729; } .bool { background: #cca6d6; }
.n-grid { left: 238px; top: 119px; width: 231px; height: 267px; }
.n-grid h3 { background: #14655d; margin-bottom: 5px; }
.n-voro { left: 230px; top: 402px; width: 231px; height: 537px; }
.n-voro h3 { background: #6b4033; margin-bottom: 5.500px; }
.n-mul { left: 527px; top: 445px; width: 232px; height: 241px; }
.n-mul h3 { background: #203a77; }
.n-edge { left: 825px; top: 403px; width: 248px; height: 123px; }
.n-edge h3 { background: #6b263d; }
.n-view { left: 1773px; top: 87px; width: 232px; height: 158px; }
.n-view h3 { background: #512638; }
.n-view .eye { width: 22px; height: 17px; margin-left: auto; margin-right: 15px; }
.tab-n { position: absolute; left: -1px; top: 82px; width: 10px; height: 18px; color: #aaa; }
.tab-n2 { position: absolute; right: -3px; top: 82px; width: 12px; height: 18px; color: #aaa; }
.scroll-h { position: absolute; left: 14px; bottom: 4px; width: 2016px; height: 5px; border-radius: 3px; background: #1d2831; }
.scroll-v { position: absolute; right: 0; top: 67px; width: 7px; height: 860px; border-radius: 4px 0 0 4px; background: #1a232b; }
```
FILE: app.js
```
const CELLS = 149;   // faces per side of the grid
const SCALE = 5;     // texture scale

// Spreadsheet rows: vertices of a 150 x 150 grid, one metre wide.
const table = document.getElementById('table');
for (let i = 0; i < 22; i++) {
  const row = document.createElement('div');
  row.className = 'tr';
  const y = (-0.5 + i / CELLS).toFixed(3);
  row.innerHTML = `<span class="ix">${i}</span><span class="v v1">-0.500</span><span class="v">${y}</span><span class="v v3">0.000</span>`;
  table.appendChild(row);
}

// Jenkins lookup3 hash of float bit patterns.
const floatBuf = new Float32Array(1), intBuf = new Int32Array(floatBuf.buffer);
const bits = f => { floatBuf[0] = f; return intBuf[0]; };
const rot = (x, k) => (x << k) | (x >>> (32 - k));

function finalMix(a, b, c) {
  c ^= b; c = (c - rot(b, 14)) | 0;
  a ^= c; a = (a - rot(c, 11)) | 0;
  b ^= a; b = (b - rot(a, 25)) | 0;
  c ^= b; c = (c - rot(b, 16)) | 0;
  a ^= c; a = (a - rot(c, 4)) | 0;
  b ^= a; b = (b - rot(a, 14)) | 0;
  c ^= b; c = (c - rot(b, 24)) | 0;
  return (c >>> 0) / 4294967295;
}
function hash3(x, y, z) {
  const s = (0xdeadbeef + 12 + 13) | 0;
  return finalMix((s + x) | 0, (s + y) | 0, (s + z) | 0);
}
function hash4(x, y, z, w) {
  const s = (0xdeadbeef + 16 + 13) | 0;
  let a = (s + x) | 0, b = (s + y) | 0, c = (s + z) | 0;
  a = (a - c) | 0; a ^= rot(c, 4); c = (c + b) | 0;
  b = (b - a) | 0; b ^= rot(a, 6); a = (a + c) | 0;
  c = (c - b) | 0; c ^= rot(b, 8); b = (b + a) | 0;
  a = (a - c) | 0; a ^= rot(c, 16); c = (c + b) | 0;
  b = (b - a) | 0; b ^= rot(a, 19); a = (a + c) | 0;
  c = (c - b) | 0; c ^= rot(b, 4); b = (b + a) | 0;
  return finalMix((a + w) | 0, b, c);
}

const cache = {};
function feature(x, y, z) {
  const key = x + ',' + y + ',' + z;
  if (!cache[key]) {
    const X = bits(x), Y = bits(y), Z = bits(z);
    cache[key] = { key, p: [x + hash3(X, Y, Z), y + hash4(X, Y, Z, bits(1)), z + hash4(X, Y, Z, bits(2))] };
  }
  return cache[key];
}

// Voronoi cell of every face centre.
const ids = [];
for (let j = 0; j < CELLS; j++) {
  for (let i = 0; i < CELLS; i++) {
    const px = ((i + 0.5) / CELLS - 0.5) * SCALE, py = ((j + 0.5) / CELLS - 0.5) * SCALE;
    const cx = Math.floor(px), cy = Math.floor(py);
    let best = Infinity, key = '';
    for (let c = -1; c <= 1; c++) for (let b = -1; b <= 1; b++) for (let a = -1; a <= 1; a++) {
      const f = feature(cx + a, cy + b, c);
      const d = (f.p[0] - px) ** 2 + (f.p[1] - py) ** 2 + f.p[2] ** 2;
      if (d < best) { best = d; key = f.key; }
    }
    ids.push(key);
  }
}
const clamp = n => Math.min(CELLS - 1, Math.max(0, n));
const cell = (i, j) => ids[clamp(j) * CELLS + clamp(i)];

// Each face corner is the mean of its two edges; interpolate inside the face.
const canvas = document.getElementById('plane'), N = canvas.width, ctx = canvas.getContext('2d');
const img = ctx.createImageData(N, N);
for (let y = 0; y < N; y++) {
  for (let x = 0; x < N; x++) {
    const u = (x + 0.5) / N * CELLS, v = (N - y - 0.5) / N * CELLS;
    const i = Math.floor(u), j = Math.floor(v), fu = u - i, fv = v - j, me = cell(i, j);
    const L = cell(i - 1, j) !== me, R = cell(i + 1, j) !== me, B = cell(i, j - 1) !== me, T = cell(i, j + 1) !== me;
    const bl = (L + B) / 2, br = (R + B) / 2, tl = (L + T) / 2, tr = (R + T) / 2;
    const s = (bl * (1 - fu) + br * fu) * (1 - fv) + (tl * (1 - fu) + tr * fu) * fv;
    const o = (y * N + x) * 4;
    img.data[o] = img.data[o + 1] = img.data[o + 2] = 255 * (s <= 0.0031308 ? 12.92 * s : 1.055 * s ** (1 / 2.4) - 0.055);
    img.data[o + 3] = 255;
  }
}
ctx.putImageData(img, 0, 0);
```
